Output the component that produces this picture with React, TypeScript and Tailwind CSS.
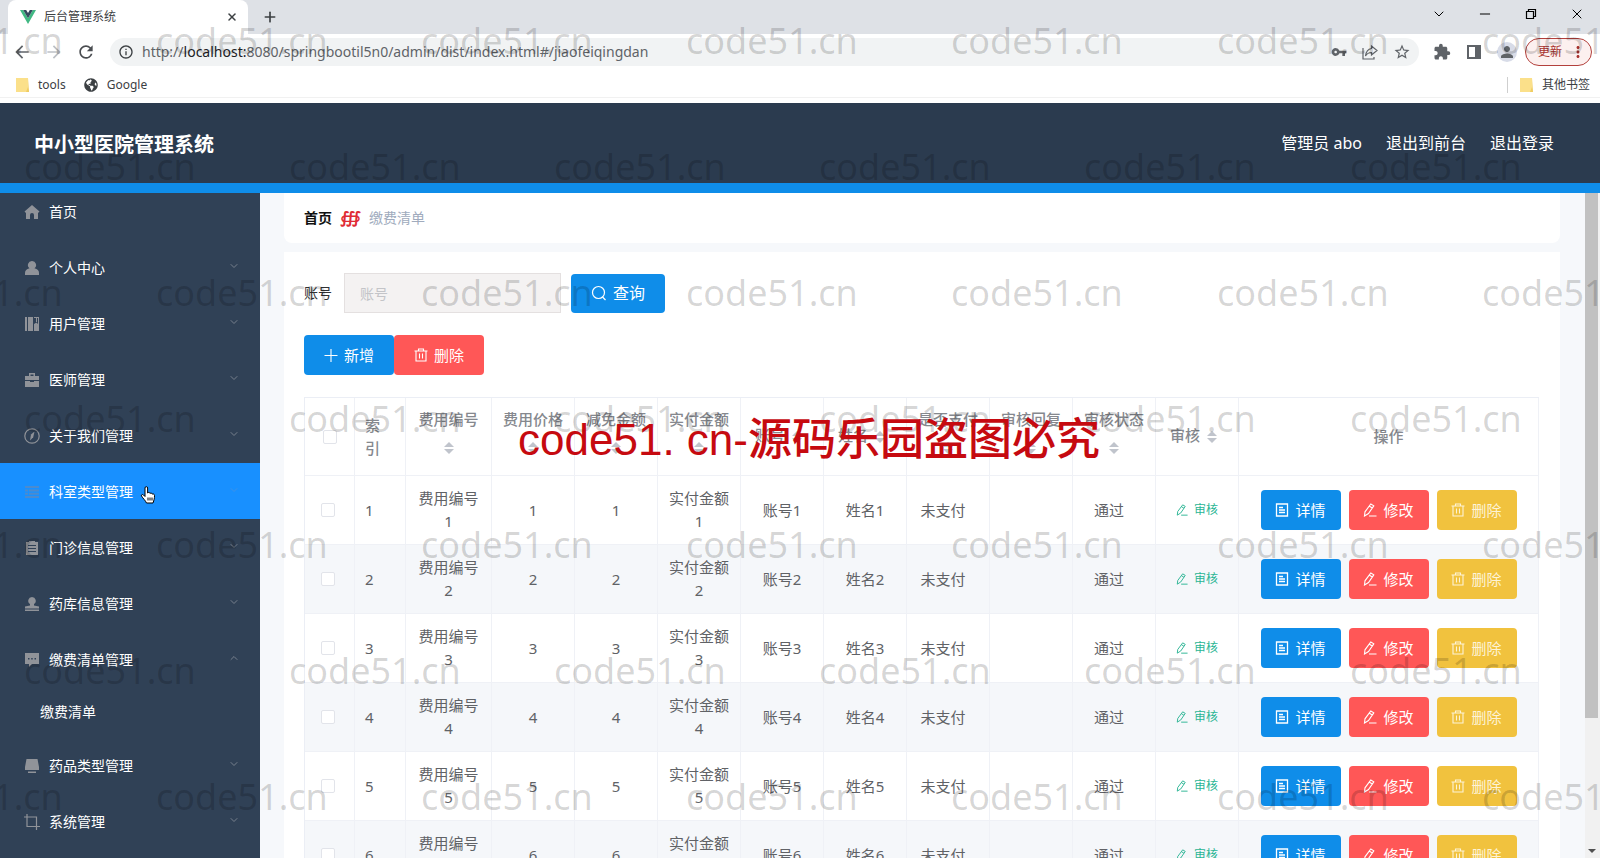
import React, { useState } from 'react';
import { X, Plus, Minus, ChevronDown, ChevronUp } from 'lucide-react';
import { FaGlobeAmericas } from 'react-icons/fa';
import {
  MdArrowBack,
  MdArrowForward,
  MdExtension,
  MdInfoOutline,
  MdMoreVert,
  MdPerson,
  MdRefresh,
  MdStarBorder,
  MdVpnKey,
} from 'react-icons/md';

interface MenuItem {
  name: string;
  icon: keyof typeof menuIcons;
  leaf?: boolean;
  children?: string[];
}

interface Column {
  label: string;
  width: string;
}

const menuIcons = {
  home: <path d="M8 1 .500 7.500 2 9v6h4v-4a2 2 0 0 1 4 0v4h4V9l1.500-1.500z" />,
  user: <path d="M8 1a4 4 0 0 1 2.500 7.200C13.500 8.800 15 10.500 15 13v2H1v-2c0-2.500 1.500-4.200 4.500-4.800A4 4 0 0 1 8 1z" />,
  books: <path d="M1 1h2v14H1zM4 1h5v14H4zM10 1h5v14h-5V8l2.500-1.500L14 8V2h-1v4h-1V2h-2z" />,
  briefcase: <path d="M5 4V1h6v3h4v4H1V4zm1.500-1.500V4h3V2.500zM1 9h5v1h4V9h5v6H1z" fillRule="evenodd" />,
  compass: (
    <>
      <circle cx="8" cy="8" r="7.200" fill="none" stroke="currentColor" strokeWidth="1.200" />
      <path d="M10.500 3.500 9.200 9.300 6 12.500l1-6z" />
    </>
  ),
  fold: <path d="M1 2h14v2H1zM1 12h14v2H1zM1 5.500h3v2H1zM5 5.500h10v2H5zM1 8.800h3v2H1zM5 8.800h10v2H5z" />,
  order: <path d="M2 2h3V1h6v1h3v13H2zm2 3v1h8V5zm0 3v1h8V8zm0 3v1h8v-1z" fillRule="evenodd" />,
  stamp: <path d="M8 1a3.800 3.800 0 0 1 2 7v1.500l5 1v2H1v-2l5-1V8a3.800 3.800 0 0 1 2-7zM1 13.500h14V15H1z" />,
  comment: <path d="M1 1h14v11H8l-3 3v-3H1zm3 5v1.500h1.500V6zm3.200 0v1.500h1.500V6zm3.300 0v1.500H12V6z" fillRule="evenodd" />,
  platform: <path d="M2.500 1h11l1.500 8v3H1V9zM4 13.500h8V15H4z" />,
  crop: <path d="M3 0v12.500h9.500V3H0M12.500 12.500H16M12.500 12.500V16" fill="none" stroke="currentColor" strokeWidth="1.200" />,
};

const menu: MenuItem[] = [
  { name: '首页', icon: 'home', leaf: true },
  { name: '个人中心', icon: 'user' },
  { name: '用户管理', icon: 'books' },
  { name: '医师管理', icon: 'briefcase' },
  { name: '关于我们管理', icon: 'compass' },
  { name: '科室类型管理', icon: 'fold' },
  { name: '门诊信息管理', icon: 'order' },
  { name: '药库信息管理', icon: 'stamp' },
  { name: '缴费清单管理', icon: 'comment', children: ['缴费清单'] },
  { name: '药品类型管理', icon: 'platform' },
  { name: '系统管理', icon: 'crop' },
];

const columns: Column[] = [
  { label: '费用编号', width: 'w-[86px]' },
  { label: '费用价格', width: 'w-[83px]' },
  { label: '减免金额', width: 'w-[83px]' },
  { label: '实付金额', width: 'w-[83px]' },
  { label: '账号', width: 'w-[83px]' },
  { label: '姓名', width: 'w-[83px]' },
  { label: '是否支付', width: 'w-[83px]' },
  { label: '审核回复', width: 'w-[83px]' },
  { label: '审核状态', width: 'w-[83px]' },
  { label: '审核', width: 'w-[83px]' },
];

const rows = [1, 2, 3, 4, 5, 6];

const border = 'border-r border-b border-[#eff1f6]';
const headCell = `${border} px-[10px] py-[10px] font-medium`;
const cell = `${border} px-[10px] py-[11px]`;

const SearchIcon = () => (
  <svg viewBox="0 0 16 16" className="w-4 h-4" fill="none" stroke="currentColor" strokeWidth="1.2">
    <circle cx="7.500" cy="7.500" r="6" />
    <path d="m11.500 12 3 3" />
  </svg>
);

const TrashIcon = () => (
  <svg viewBox="0 0 14 14" className="w-[14px] h-[14px]" fill="none" stroke="currentColor" strokeWidth="1.1">
    <path d="M.5 3h13M4.500 3V1h5v2M2 3v10h10V3M5.500 5.500v5M8.500 5.500v5" />
  </svg>
);

const DocIcon = () => (
  <svg viewBox="0 0 14 14" className="w-[14px] h-[14px]" fill="none" stroke="currentColor" strokeWidth="1.3">
    <path d="M1.500 1h11v12h-11zM4 4.500h4M4 7h6M4 9.500h6" />
  </svg>
);

const EditIcon = ({ className }: { className: string }) => (
  <svg viewBox="0 0 14 14" className={className} fill="none" stroke="currentColor" strokeWidth="1.1">
    <path d="M7.800 1 10.800 2.800 5.500 10.500 1.500 13 2 8.800zM6.500 3.200l2.800 1.800M6 13h7.500" />
  </svg>
);

const SortCaret = () => (
  <span className="inline-flex w-6 h-[34px] flex-col items-center justify-center gap-[2px] align-middle">
    <span className="border-x-[5px] border-b-[5px] border-x-transparent border-b-[#c0c4cc]" />
    <span className="border-x-[5px] border-t-[5px] border-x-transparent border-t-[#c0c4cc]" />
  </span>
);

const Folder = () => (
  <svg viewBox="0 0 13 14" className="w-[13px] h-[14px]">
    <path d="M0 0h12v10l1 4H0z" fill="#fbe08a" />
    <path d="M12 0v9l-2 5h3z" fill="#f0cd62" />
  </svg>
);

const BrowserBar: React.FC = () => (
  <div className="shrink-0 bg-white text-[#3c4043]">
    <div className="h-[34px] bg-[#dee1e6] flex items-end pl-2">
      <div className="w-60 h-[34px] bg-white rounded-t-lg flex items-center pl-3 pr-[10px]">
        <svg viewBox="0 0 16 14" className="w-4 h-[14px] mr-2">
          <path d="M0 0h3.200L8 8.300 12.800 0H16L8 14z" fill="#41b883" />
          <path d="M3.200 0h3L8 3.100 9.800 0h3L8 8.300z" fill="#35495e" />
        </svg>
        <span className="text-xs flex-1">后台管理系统</span>
        <X className="w-3 h-3" strokeWidth={3} />
      </div>
      <div className="h-[34px] flex items-center pl-[14px]">
        <Plus className="w-4 h-4" strokeWidth={2.5} />
      </div>
      <div className="ml-auto h-[34px] flex items-center gap-[30px] pr-[15px] pb-[6px] text-black">
        <ChevronDown className="w-4 h-4" strokeWidth={1.5} />
        <Minus className="w-4 h-4" strokeWidth={1.5} />
        <svg viewBox="0 0 16 16" className="w-4 h-4" fill="none" stroke="currentColor" strokeWidth="1.2">
          <path d="M3.500 5.500h7v7h-7zM5.500 5.500v-2h7v7h-2" />
        </svg>
        <X className="w-4 h-4" strokeWidth={1.5} />
      </div>
    </div>
    <div className="h-9 flex items-center pl-3 pr-2">
      <MdArrowBack className="w-5 h-5 mr-3 text-[#5f6368]" />
      <MdArrowForward className="w-5 h-5 mr-3 text-[#bdc1c6]" />
      <MdRefresh className="w-5 h-5 mr-[14px] text-[#4a4d51]" />
      <div className="flex-1 h-7 rounded-full bg-[#f1f3f4] flex items-center px-2">
        <MdInfoOutline className="w-4 h-4 mr-2" />
        <span className="flex-1 text-sm text-[#5f6368]">
          http://<span className="text-[#202124]">localhost:</span>8080/springbootil5n0/admin/dist/index.html#/jiaofeiqingdan
        </span>
        <div className="flex items-center gap-[15px] text-[#5f6368]">
          <MdVpnKey className="w-4 h-4" />
          <svg viewBox="0 0 16 16" className="w-4 h-4" fill="none" stroke="currentColor" strokeWidth="1.2">
            <path d="M1 4v11h11v-2M9.500 2 15 6.500 9.500 11V8.500C7 8.500 5 9.500 3.500 12 4 7.500 6.500 5 9.500 4.500z" />
          </svg>
          <MdStarBorder className="w-[18px] h-[18px]" />
        </div>
      </div>
      <div className="flex items-center gap-[14px] pl-[14px] text-[#5f6368]">
        <MdExtension className="w-[18px] h-[18px]" />
        <svg viewBox="0 0 18 18" className="w-[18px] h-[18px]">
          <path d="M2 2h14v14H2zm2 2v10h6V4z" fill="currentColor" fillRule="evenodd" />
        </svg>
        <span className="w-5 h-5 rounded-full bg-[#d8dce8] flex items-center justify-center -mr-[6px]">
          <MdPerson className="w-[18px] h-[18px]" />
        </span>
        <button className="w-[67px] h-7 rounded-full border border-[#b3403c] bg-[#fcf0ef] text-[#a8322e] text-xs flex items-center justify-between pl-3 pr-1">
          更新
          <MdMoreVert className="w-[18px] h-[18px]" />
        </button>
      </div>
    </div>
    <div className="h-7 pt-[2px] flex items-center pl-4 pr-[10px] text-xs border-b border-[#f1f1f1]">
      <Folder />
      <span className="ml-[9px]">tools</span>
      <FaGlobeAmericas className="w-[14px] h-[14px] ml-[18px] mr-[9px]" />
      <span>Google</span>
      <div className="ml-auto h-4 border-l border-[#cfcfcf] pl-3 flex items-center gap-[9px]">
        <Folder />
        <span>其他书签</span>
      </div>
    </div>
    <div className="h-[5px] bg-white" />
  </div>
);

const Sidebar: React.FC<{ active: string; onSelect: (name: string) => void }> = ({ active, onSelect }) => (
  <aside className="w-[260px] shrink-0 bg-[#304156] overflow-hidden relative">
    <ul className="-mt-[10px] text-sm text-white">
      {menu.map(item => (
        <li key={item.name}>
          <button
            onClick={() => onSelect(item.name)}
            className={`w-full h-14 flex items-center pl-6 pr-5 pt-[2px] cursor-pointer ${active === item.name ? 'bg-[#1890ff]' : ''}`}
          >
            <svg
              viewBox="0 0 16 16"
              fill="currentColor"
              className={`w-4 h-4 mr-[9px] ${active === item.name ? 'text-[#4a8bcf]' : 'text-[#909399]'}`}
            >
              {menuIcons[item.icon]}
            </svg>
            <span>{item.name}</span>
            {!item.leaf && (
              <span className={`ml-auto pb-1 ${active === item.name ? 'text-[#3d92e8]' : 'text-[#77808d]'}`}>
                {item.children
                  ? <ChevronUp className="w-3 h-3" strokeWidth={2} />
                  : <ChevronDown className="w-3 h-3" strokeWidth={2} />}
              </span>
            )}
          </button>
          {item.children?.map(child => (
            <a key={child} href="#/jiaofeiqingdan" className="h-[50px] flex items-center pl-10">{child}</a>
          ))}
        </li>
      ))}
    </ul>
    {/* mouse pointer over the hovered entry */}
    <svg viewBox="0 0 16 18" className="absolute left-[140px] top-[293px] w-4 h-[18px]" fill="#fff" stroke="#000" strokeWidth="1">
      <path d="M5 10.500V2a1.300 1.300 0 0 1 2.600 0v5c.8-1 2.200-.6 2.400.4.900-.6 2-.2 2.200.7 1-.4 2.300 0 2.300 1.400 0 3-.5 4.500-1.500 7.500H6.500C5.500 14.500 3 12.500 1.500 10c-.6-1.400 1-2 2-1z" />
      <path d="M8 11.500v3M10 11.500v3M12 11.500v3" />
    </svg>
  </aside>
);

const DataTable: React.FC = () => {
  const [selected, setSelected] = useState<number[]>([]);

  const toggle = (id: number) => {
    setSelected(selected.includes(id) ? selected.filter(s => s !== id) : [...selected, id]);
  };

  const box = 'block mx-auto w-[14px] h-[14px] appearance-none border border-[#e2e4ea] rounded-[2px] bg-white checked:bg-[#409eff]';

  return (
    <table className="w-full table-fixed border-separate border-spacing-0 border-t border-l border-[#ebeef5] text-[15px] leading-[23px] text-[#606266] text-center">
      <thead>
        <tr className="text-[#85888e]">
          <th className={`${headCell} w-[50px]`}>
            <input
              type="checkbox"
              aria-label="全选"
              className={box}
              checked={selected.length === rows.length}
              onChange={() => setSelected(selected.length === rows.length ? [] : rows)}
            />
          </th>
          <th className={`${border} w-[51px] pl-2 pr-[23px] font-medium`}>索引</th>
          {columns.map(col => (
            <th key={col.label} className={`${headCell} ${col.width}`}>
              {col.label}
              <SortCaret />
            </th>
          ))}
          <th className={headCell}>操作</th>
        </tr>
      </thead>
      <tbody>
        {rows.map(n => (
          <tr key={n} className="even:bg-[#f5f7fa]">
            <td className={`${border} pr-[3px]`}>
              <input type="checkbox" aria-label={`选择 ${n}`} className={box} checked={selected.includes(n)} onChange={() => toggle(n)} />
            </td>
            <td className={`${cell} text-left`}>{n}</td>
            <td className={cell}>费用编号{n}</td>
            <td className={cell}>{n}</td>
            <td className={cell}>{n}</td>
            <td className={cell}>实付金额{n}</td>
            <td className={cell}>账号{n}</td>
            <td className={cell}>姓名{n}</td>
            <td className={cell}><span className="pr-[10px]">未支付</span></td>
            <td className={cell} />
            <td className={cell}><span className="pr-[10px]">通过</span></td>
            <td className={cell}>
              <button className="inline-flex items-center gap-[6px] text-xs text-[#2bb594]">
                <EditIcon className="w-3 h-3" />
                审核
              </button>
            </td>
            <td className={border}>
              <div className="flex justify-center gap-2 text-white">
                <button className="w-20 h-10 rounded bg-[#0f8de9] flex items-center justify-center gap-[6px]"><DocIcon />详情</button>
                <button className="w-20 h-10 rounded bg-[#ff5757] flex items-center justify-center gap-[6px]"><EditIcon className="w-[14px] h-[14px]" />修改</button>
                <button className="w-20 h-10 rounded bg-[#f1c23e] text-[#fdf3d6] flex items-center justify-center gap-[6px]"><TrashIcon />删除</button>
              </div>
            </td>
          </tr>
        ))}
      </tbody>
    </table>
  );
};

const Watermark: React.FC = () => (
  <div className="absolute inset-0 overflow-hidden pointer-events-none z-10">
    {[0, 1, 2, 3, 4, 5, 6].map(r =>
      [0, 1, 2, 3, 4, 5, 6].map(c => (
        <span
          key={`${r}-${c}`}
          className="absolute text-[36px] leading-9 text-black/17"
          style={{ left: (r % 2 ? 24 : -109) + Math.floor(c * 265.2), top: 23 + r * 126 }}
        >
          code51.cn
        </span>
      ))
    )}
    <p className="absolute inset-x-0 top-[415px] pl-[18px] text-center text-[44px] leading-[50px] font-medium text-[#c60a10] whitespace-nowrap font-['Liberation_Sans','Noto_Sans_CJK_SC',sans-serif]">
      code51. cn-源码乐园盗图必究
    </p>
  </div>
);

export default function App() {
  const [active, setActive] = useState('科室类型管理');
  const [account, setAccount] = useState('');

  return (
    <div className="relative h-screen overflow-hidden flex flex-col font-['Noto_Sans','Noto_Sans_CJK_SC',sans-serif]">
      <BrowserBar />
      <header className="shrink-0 h-[90px] bg-[#2b3b4f] border-b-[10px] border-[#0f8de9] flex items-center justify-between pl-[34px] pr-[46px] text-white">
        <h1 className="pt-1 text-xl font-bold">中小型医院管理系统</h1>
        <nav className="flex gap-6 text-base">
          <span>管理员 abo</span>
          <a href="#/front">退出到前台</a>
          <a href="#/login">退出登录</a>
        </nav>
      </header>
      <div className="flex-1 min-h-0 flex">
        <Sidebar active={active} onSelect={setActive} />
        <main className="flex-1 min-w-0 overflow-hidden bg-[#f6f8fb] pl-6 pr-[25px]">
          <div className="h-[50px] bg-white rounded-b-lg px-5 flex items-center gap-2 text-sm">
            <a href="#/" className="font-bold text-[#111]">首页</a>
            <span className="text-[#e02c35] text-base leading-5 font-bold font-['DejaVu_Sans',sans-serif]">∰</span>
            <span className="text-[#a0abbd]">缴费清单</span>
          </div>
          <section className="mt-[9px] bg-white pl-5 pr-[21px] pt-[21px]">
            <form className="flex items-center text-sm" onSubmit={e => e.preventDefault()}>
              <label htmlFor="account" className="mr-3 text-[#303133]">账号</label>
              <input
                id="account"
                value={account}
                onChange={e => setAccount(e.target.value)}
                placeholder="账号"
                className="w-[217px] h-10 px-[15px] bg-[#f4f2f2] border border-[#e4e0e0] placeholder:text-[#c3c4c8]"
              />
              <button className="ml-[10px] w-[94px] h-[39px] rounded bg-[#0f8de9] text-white text-base flex items-center justify-center gap-[6px]">
                <SearchIcon />
                查询
              </button>
            </form>
            <div className="flex mt-[22px] text-[15px] text-white">
              <button className="w-[90px] h-10 rounded bg-[#0f8de9] flex items-center justify-center gap-[6px]">
                <svg viewBox="0 0 14 14" className="w-[14px] h-[14px]" stroke="currentColor" strokeWidth="1.1">
                  <path d="M.5 7.500h13M7 1v13" />
                </svg>
                新增
              </button>
              <button className="w-[90px] h-10 rounded bg-[#ff5757] flex items-center justify-center gap-[6px]">
                <TrashIcon />
                删除
              </button>
            </div>
            <div className="mt-[22px]">
              <DataTable />
            </div>
          </section>
        </main>
        <div className="w-[15px] shrink-0 bg-[#f1f1f1] flex flex-col items-center pr-[2px]">
          <div className="w-[13px] h-[79%] bg-[#c1c1c1]" />
          <span className="mt-auto mb-[5px] border-x-4 border-t-4 border-x-transparent border-t-[#505050]" />
        </div>
      </div>
      <Watermark />
    </div>
  );
}
